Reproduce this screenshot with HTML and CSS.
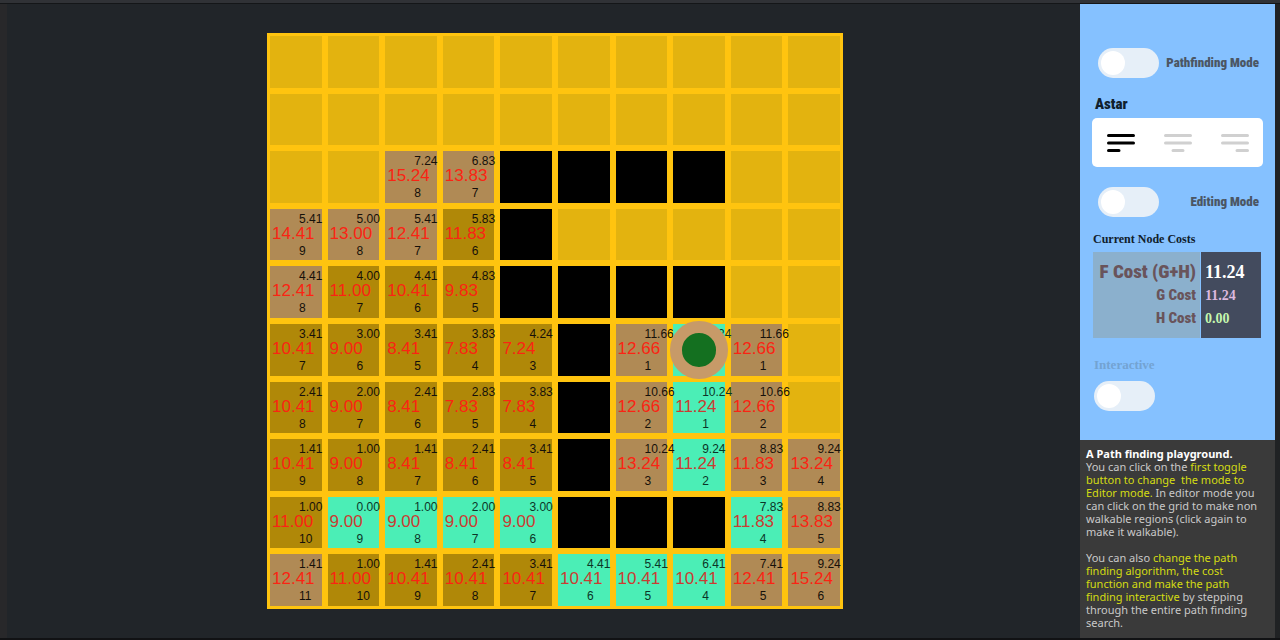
FILE: index.html
```html
<!DOCTYPE html>
<html lang="en">
<head>
<meta charset="utf-8">
<title>Path finding playground</title>
<link rel="stylesheet" href="styles.css">
</head>
<body>
<div class="topbar"></div>
<div class="workspace">
  <main class="stage">
    <div class="board" id="board"></div>
  </main>
  <aside class="sidebar">
    <div class="controls">
      <label class="toggle-row">
        <input class="toggle" type="checkbox">
        <span>Pathfinding Mode</span>
      </label>
      <fieldset class="algorithm">
        <legend>Astar</legend>
        <div class="segments">
          <label class="segment"><input type="radio" name="algorithm" aria-label="Astar" checked>
            <svg width="28" height="20" viewBox="0 0 28 20"><path d="M1.5 2.500h25M1.500 10h25M1.500 17.500h10.500"/></svg></label>
          <label class="segment"><input type="radio" name="algorithm" aria-label="Second algorithm">
            <svg width="28" height="20" viewBox="0 0 28 20"><path d="M1.500 2.500h25M1.500 10h25M9 17.500h10"/></svg></label>
          <label class="segment"><input type="radio" name="algorithm" aria-label="Third algorithm">
            <svg width="28" height="20" viewBox="0 0 28 20"><path d="M1.500 2.500h25M1.500 10h25M16 17.500h10.500"/></svg></label>
        </div>
      </fieldset>
      <label class="toggle-row">
        <input class="toggle" type="checkbox">
        <span>Editing Mode</span>
      </label>
      <table class="costs">
        <caption>Current Node Costs</caption>
        <tbody>
          <tr class="total"><th scope="row">F Cost (G+H)</th><td>11.24</td></tr>
          <tr class="g"><th scope="row">G Cost</th><td>11.24</td></tr>
          <tr class="h"><th scope="row">H Cost</th><td>0.00</td></tr>
        </tbody>
      </table>
      <label class="interactive">
        <span>Interactive</span>
        <input class="toggle" type="checkbox">
      </label>
    </div>
    <section class="info">
      <h1>A Path finding playground.</h1>
      <p>You can click on the <em>first toggle<br>button to change&nbsp; the mode to<br>Editor mode.</em> In editor mode you<br>can click on the grid to make non<br>walkable regions (click again to<br>make it walkable).</p>
      <p>You can also <em>change the path<br>finding algorithm, the cost<br>function and make the path<br>finding interactive</em> by stepping<br>through the entire path finding<br>search.</p>
    </section>
  </aside>
</div>
<script src="board.js"></script>
</body>
</html>
```
FILE: board.js
```js
// One row per line. "." is free, "#" is a wall; other cells are
// state:g:f:h, where o = open, c = closed, p = path, e = path end.
const rows = [
  ". . . . . . . . . .",
  ". . . . . . . . . .",
  ". . o:7.24:15.24:8 o:6.83:13.83:7 # # # # . .",
  "o:5.41:14.41:9 o:5.00:13.00:8 o:5.41:12.41:7 c:5.83:11.83:6 # . . . . .",
  "o:4.41:12.41:8 c:4.00:11.00:7 c:4.41:10.41:6 c:4.83:9.83:5 # # # # . .",
  "c:3.41:10.41:7 c:3.00:9.00:6 c:3.41:8.41:5 c:3.83:7.83:4 c:4.24:7.24:3 # o:11.66:12.66:1 e:11.24:11.24:0 o:11.66:12.66:1 .",
  "c:2.41:10.41:8 c:2.00:9.00:7 c:2.41:8.41:6 c:2.83:7.83:5 c:3.83:7.83:4 # o:10.66:12.66:2 p:10.24:11.24:1 o:10.66:12.66:2 .",
  "c:1.41:10.41:9 c:1.00:9.00:8 c:1.41:8.41:7 c:2.41:8.41:6 c:3.41:8.41:5 # o:10.24:13.24:3 p:9.24:11.24:2 o:8.83:11.83:3 o:9.24:13.24:4",
  "c:1.00:11.00:10 p:0.00:9.00:9 p:1.00:9.00:8 p:2.00:9.00:7 p:3.00:9.00:6 # # # p:7.83:11.83:4 o:8.83:13.83:5",
  "o:1.41:12.41:11 c:1.00:11.00:10 c:1.41:10.41:9 c:2.41:10.41:8 c:3.41:10.41:7 p:4.41:10.41:6 p:5.41:10.41:5 p:6.41:10.41:4 o:7.41:12.41:5 o:9.24:15.24:6"
];
const states = { "#": "wall", o: "open", c: "closed", p: "path", e: "path" };
const board = document.getElementById("board");

rows.forEach((row, y) => row.split(" ").forEach((entry, x) => {
  const [state, g, f, h] = entry.split(":");
  const cell = document.createElement("button");
  cell.type = "button";
  cell.className = "cell " + (states[state] || "");
  cell.setAttribute("aria-label", "Node " + x + ", " + y);
  if (g) {
    [["g-cost", g], ["f-cost", f], ["h-cost", h]].forEach(([name, value]) => {
      const cost = document.createElement("span");
      cost.className = name;
      cost.textContent = value;
      cell.append(cost);
    });
  }
  if (state === "e") {
    const marker = document.createElement("span");
    marker.className = "marker";
    cell.append(marker);
  }
  board.append(cell);
}));
```
FILE: styles.css
```css
* { box-sizing: border-box; }

body {
  margin: 0;
  min-height: 100vh;
  display: flex;
  flex-direction: column;
  background: #212529;
  border-bottom: 2px solid #111214;
  font-family: "Liberation Sans", Arial, sans-serif;
}

.topbar {
  height: 4px;
  background: #303236;
  border-bottom: 1px solid #141618;
}

.workspace {
  flex: 1;
  display: flex;
  border-left: 7px solid #28282a;
  border-right: 5px solid #202224;
}

.stage {
  flex: 1;
  display: flex;
  align-items: center;
  justify-content: center;
  padding-left: 23px;
  background: #212529;
}

.board {
  height: 90vh;
  aspect-ratio: 1;
  display: grid;
  grid-template: repeat(10, 1fr) / repeat(10, 1fr);
  gap: 6px;
  padding: 3px;
  background: #ffc40f;
}

.cell {
  position: relative;
  min-width: 0;
  min-height: 0;
  display: flex;
  flex-direction: column;
  align-items: flex-start;
  justify-content: flex-start;
  padding: 4px 0 0 2px;
  border: 0;
  background: #e3b30f;
  font: 12px/12px "Liberation Sans", Arial, sans-serif;
  color: #15100a;
  text-align: left;
}

.wall { background: #000; }
.open { background: #b08a55; }
.closed { background: #b08808; }
.path { background: #4beeb6; }

.g-cost,
.h-cost {
  position: relative;
  z-index: 1;
  margin-left: 27px;
}

.f-cost {
  font-size: 17px;
  line-height: 18px;
  color: #fa2413;
}

.path .f-cost { color: #c93c32; }
.path .g-cost,
.path .h-cost { color: #0b3527; }
.h-cost { margin-top: 2px; }

.marker {
  position: absolute;
  z-index: 2;
  inset: -3px;
  border: 12px solid #c79a68;
  border-radius: 50%;
  background: #147020;
}

.sidebar {
  width: 195px;
  display: flex;
  flex-direction: column;
}

.controls {
  padding: 44px 12px 29px;
  background: #85c1ff;
}

.toggle-row {
  display: flex;
  align-items: center;
  justify-content: space-between;
  padding: 0 4px 0 6px;
  font: 900 13px/16px "Roboto Condensed", Roboto, sans-serif;
  color: #4b5664;
  white-space: nowrap;
}

.toggle {
  appearance: none;
  flex: none;
  width: 61px;
  height: 30px;
  margin: 0;
  padding: 3px;
  border-radius: 15px;
  background: #e6eff8;
}

.toggle::before {
  content: "";
  display: block;
  width: 24px;
  height: 24px;
  border-radius: 50%;
  background: #fff;
}

.toggle:checked::before { margin-left: auto; }

.algorithm {
  min-width: 0;
  margin: 17px 0 20px;
  padding: 0;
  border: 0;
}

.algorithm legend {
  padding: 0 3px;
  font: 900 15px/18px "Roboto Condensed", Roboto, sans-serif;
  color: #10202c;
}

.segments {
  display: flex;
  margin-top: 5px;
  border-radius: 5px;
  background: #fff;
}

.segment {
  flex: 1;
  height: 49px;
  display: grid;
  place-items: center;
  color: #d0d0d0;
}

.segment input {
  grid-area: 1 / 1;
  appearance: none;
  margin: 0;
}

.segment svg {
  grid-area: 1 / 1;
  fill: none;
  stroke: currentColor;
  stroke-width: 3;
  stroke-linecap: round;
}

.segment:has(:checked) { color: #000; }

.costs {
  width: 168px;
  margin: 13px 0 0 1px;
  border-spacing: 0;
  background: #8bb0cd;
}

.costs caption {
  padding-bottom: 4px;
  font: bold 12px/18px "Liberation Serif", serif;
  color: #10202c;
  text-align: left;
}

.costs th,
.costs td { padding: 0 4px; }

.costs th {
  font: 900 15px/23px "Roboto Condensed", Roboto, sans-serif;
  color: #69545b;
  text-align: right;
  white-space: nowrap;
}

.costs td {
  width: 61px;
  border-left: 1px solid #85c1ff;
  background: #434b5e;
  font: bold 14px/23px "Liberation Serif", serif;
}

.costs .total th { padding-top: 8px; font-size: 19px; line-height: 24px; }
.costs .total td { padding-top: 8px; font-size: 18px; line-height: 24px; color: #fff; }
.costs .g td { color: #dcb9df; }
.costs .h td { padding-bottom: 8px; color: #c5f7ae; }
.costs .h th { padding-bottom: 8px; }

.interactive {
  display: flex;
  flex-direction: column;
  gap: 7px;
  margin-top: 18px;
  padding-left: 2px;
  font: bold 13px/18px "Liberation Serif", serif;
  color: #73a3d2;
}

.info {
  flex: 1;
  padding: 7px 5px 9px 6px;
  background: #3a3a3a;
  font: 11px/13px "Noto Sans", sans-serif;
  color: #c9c9c9;
  white-space: nowrap;
}

.info h1 { margin: 0; font-size: 11px; line-height: 13px; color: #fff; }
.info p { margin: 0 0 13px; }
.info p:last-child { margin: 0; }
.info em { font-style: normal; color: #d4dc12; }
```
